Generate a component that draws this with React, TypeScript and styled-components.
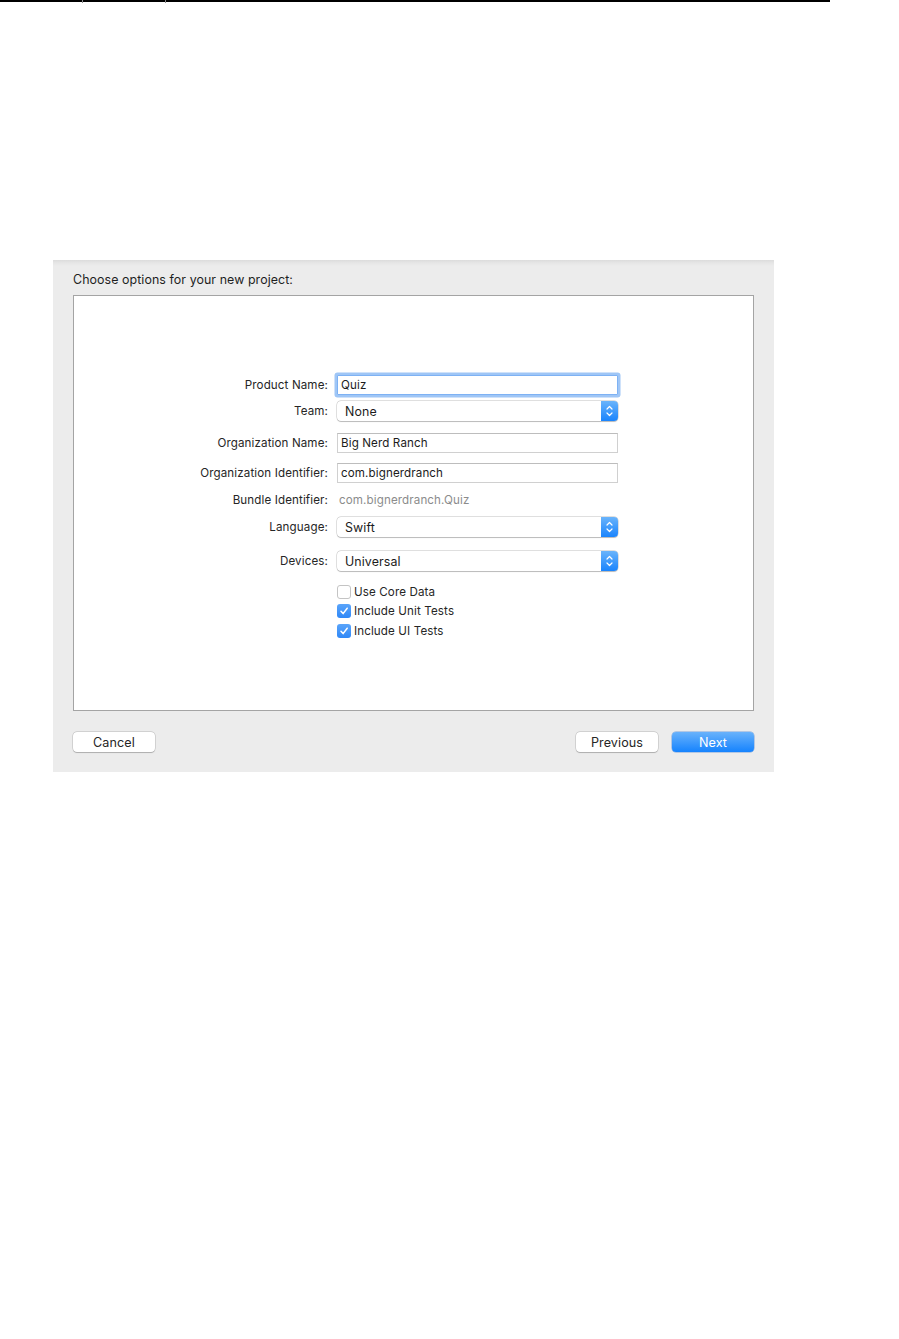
import React from "react";
import styled, { createGlobalStyle } from "styled-components";

const Global = createGlobalStyle`
  html, body { margin: 0; padding: 0; background: #ffffff; }
  body { font-family: Inter, "Liberation Sans", Arial, sans-serif; color: #1d1d1d; }
`;

const Page = styled.div`
  width: 899px;
  height: 1339px;
  position: relative;
  overflow: hidden;
`;

const TopRule = styled.div`
  width: 830px;
  height: 2px;
  background: #000;
  position: relative;
`;

const Tick = styled.span<{ $x: number }>`
  position: absolute;
  top: 0;
  left: ${(p) => p.$x}px;
  width: 1px;
  height: 3px;
  background: #8a8a8a;
`;

const Sheet = styled.div`
  margin: 258px 0 0 53px;
  width: 721px;
  height: 512px;
  box-sizing: border-box;
  padding: 0 20px;
  background: linear-gradient(#dcdcdc 0px, #e6e6e6 3px, #ececec 6px, #ececec 100%);
  display: flex;
  flex-direction: column;
`;

const Title = styled.div`
  padding-top: 12px;
  height: 16px;
  line-height: 16px;
  font-size: 12.4px;
  letter-spacing: 0.08px;
  color: #1e1e1e;
  margin-bottom: 7px;
`;

const Box = styled.div`
  height: 416px;
  box-sizing: border-box;
  border: 1px solid #a4a4a4;
  background: #ffffff;
  padding-top: 79px;
  display: flex;
  flex-direction: column;
`;

const Row = styled.div<{ $gap: number; $h?: number }>`
  display: grid;
  grid-template-columns: 254px 281px;
  column-gap: 9px;
  align-items: center;
  height: ${(p) => p.$h ?? 20}px;
  margin-top: ${(p) => p.$gap}px;
`;

const Label = styled.div`
  text-align: right;
  font-size: 11.6px;
  letter-spacing: 0.12px;
  color: #262626;
  white-space: nowrap;
`;

const Field = styled.div<{ $focus?: boolean }>`
  height: 20px;
  box-sizing: border-box;
  border: 1px solid ${(p) => (p.$focus ? "#7eb2f4" : "#d0d0d0")};
  border-top-color: ${(p) => (p.$focus ? "#7eb2f4" : "#bdbdbd")};
  background: #fff;
  padding-left: 3px;
  font-size: 11.6px;
  letter-spacing: 0.12px;
  line-height: 18px;
  color: #1c1c1c;
  box-shadow: ${(p) => (p.$focus ? "0 0 0 2.5px #9fc6f6" : "none")};
  border-radius: ${(p) => (p.$focus ? "1px" : "0")};
`;

const Static = styled.div`
  font-size: 11.6px;
  letter-spacing: 0.12px;
  color: #8c8c8c;
  padding-left: 2px;
`;

const Popup = styled.div`
  height: 20px;
  box-sizing: border-box;
  border-radius: 4px;
  background: #fff;
  box-shadow: 0 0 0 0.5px rgba(0, 0, 0, 0.22), 0 0.5px 1px rgba(0, 0, 0, 0.18);
  display: flex;
  align-items: center;
  overflow: hidden;
`;

const PopupText = styled.div`
  flex: 1;
  padding-left: 8px;
  font-size: 12.4px;
  letter-spacing: 0.1px;
  color: #1c1c1c;
`;

const Stepper = styled.div`
  width: 17px;
  height: 20px;
  background: linear-gradient(#6ab4fb, #1a84fd);
  display: flex;
  align-items: center;
  justify-content: center;
`;

const CheckRow = styled.label`
  display: flex;
  align-items: center;
  gap: 3px;
  font-size: 11.6px;
  letter-spacing: 0.12px;
  color: #262626;
`;

const Box14 = styled.span<{ $on: boolean }>`
  width: 14px;
  height: 14px;
  box-sizing: border-box;
  border-radius: 3px;
  display: flex;
  align-items: center;
  justify-content: center;
  background: ${(p) => (p.$on ? "linear-gradient(#5aa4fa, #2f88f7)" : "#fff")};
  border: ${(p) => (p.$on ? "none" : "1px solid #c4c4c4")};
`;

const Footer = styled.div`
  margin-top: 21px;
  display: flex;
  align-items: center;
  gap: 14px;
`;

const Spacer = styled.div`
  flex: 1;
`;

const Button = styled.button<{ $primary?: boolean }>`
  width: 82px;
  height: 20px;
  padding: 0;
  border-radius: 4px;
  border: none;
  font-family: Inter, "Liberation Sans", Arial, sans-serif;
  font-size: 12.6px;
  letter-spacing: 0.1px;
  color: ${(p) => (p.$primary ? "#ffffff" : "#262626")};
  background: ${(p) => (p.$primary ? "linear-gradient(#69b2fb, #1583fe)" : "#ffffff")};
  box-shadow: ${(p) =>
    p.$primary
      ? "0 0 0 0.5px rgba(10, 90, 200, 0.5)"
      : "0 0 0 0.5px rgba(0, 0, 0, 0.2), 0 0.5px 1px rgba(0, 0, 0, 0.18)"};
`;

const Chevrons = () => (
  <svg width="9" height="14" viewBox="0 0 9 14" fill="none">
    <path d="M2 5 L4.5 2.5 L7 5" stroke="#fff" strokeWidth="1.2" strokeLinecap="round" strokeLinejoin="round" />
    <path d="M2 9 L4.5 11.5 L7 9" stroke="#fff" strokeWidth="1.2" strokeLinecap="round" strokeLinejoin="round" />
  </svg>
);

const Check = () => (
  <svg width="10" height="10" viewBox="0 0 10 10" fill="none">
    <path d="M2 5.3 L4.1 7.6 L8.2 2.2" stroke="#fff" strokeWidth="1.5" strokeLinecap="round" strokeLinejoin="round" />
  </svg>
);

const PopupField = ({ value }: { value: string }) => (
  <Popup>
    <PopupText>{value}</PopupText>
    <Stepper>
      <Chevrons />
    </Stepper>
  </Popup>
);

const CheckItem = ({ on, text }: { on: boolean; text: string }) => (
  <CheckRow>
    <Box14 $on={on}>{on && <Check />}</Box14>
    {text}
  </CheckRow>
);

export default function App() {
  return (
    <Page>
      <Global />
      <TopRule>
        <Tick $x={82} />
        <Tick $x={165} />
      </TopRule>
      <Sheet>
        <Title>Choose options for your new project:</Title>
        <Box>
          <Row $gap={0}>
            <Label>Product Name:</Label>
            <Field $focus>Quiz</Field>
          </Row>
          <Row $gap={6}>
            <Label>Team:</Label>
            <PopupField value="None" />
          </Row>
          <Row $gap={12}>
            <Label>Organization Name:</Label>
            <Field>Big Nerd Ranch</Field>
          </Row>
          <Row $gap={10}>
            <Label>Organization Identifier:</Label>
            <Field>com.bignerdranch</Field>
          </Row>
          <Row $gap={7}>
            <Label>Bundle Identifier:</Label>
            <Static>com.bignerdranch.Quiz</Static>
          </Row>
          <Row $gap={7}>
            <Label>Language:</Label>
            <PopupField value="Swift" />
          </Row>
          <Row $gap={14}>
            <Label>Devices:</Label>
            <PopupField value="Universal" />
          </Row>
          <Row $gap={13} $h={16}>
            <span />
            <CheckItem on={false} text="Use Core Data" />
          </Row>
          <Row $gap={3} $h={16}>
            <span />
            <CheckItem on text="Include Unit Tests" />
          </Row>
          <Row $gap={4} $h={16}>
            <span />
            <CheckItem on text="Include UI Tests" />
          </Row>
        </Box>
        <Footer>
          <Button>Cancel</Button>
          <Spacer />
          <Button>Previous</Button>
          <Button $primary>Next</Button>
        </Footer>
      </Sheet>
    </Page>
  );
}
